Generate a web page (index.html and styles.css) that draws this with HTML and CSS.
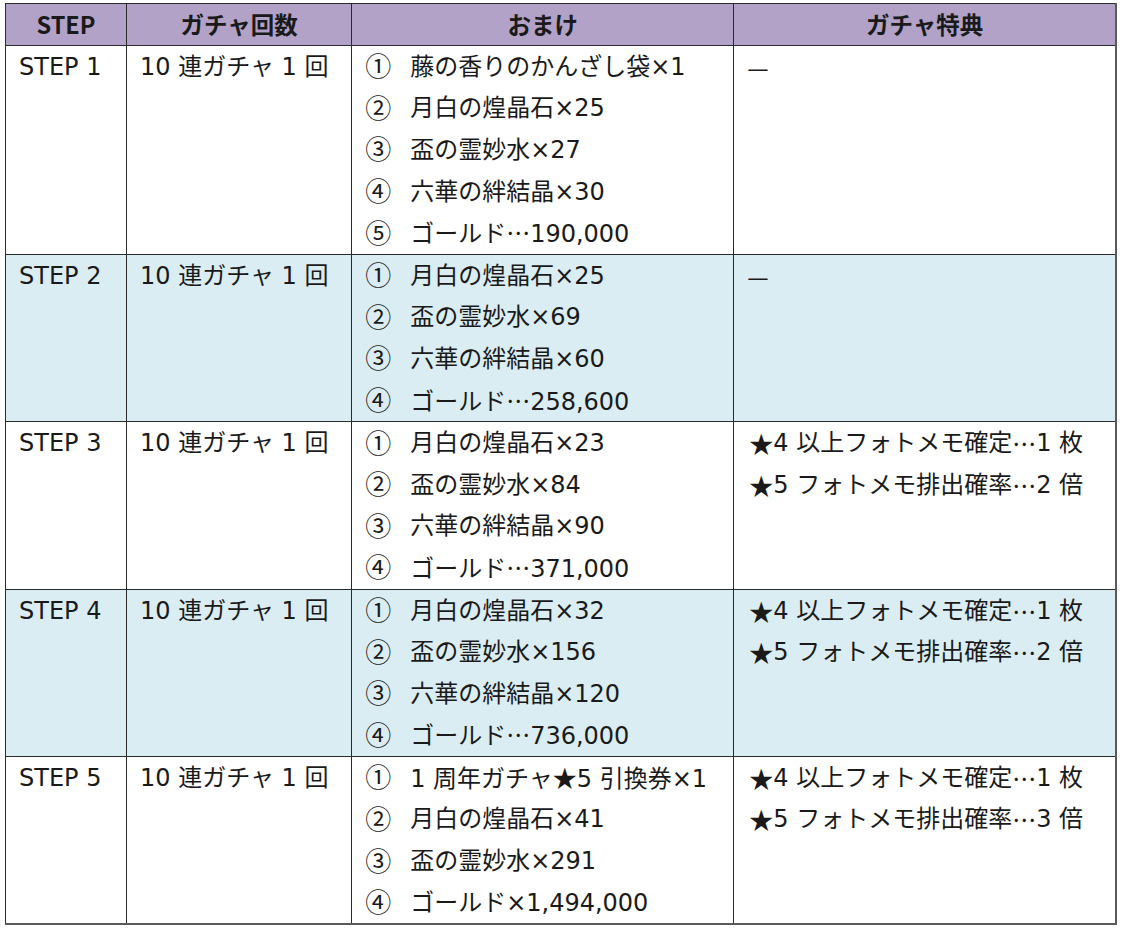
FILE: index.html
```html
<!DOCTYPE html>
<html lang="ja">
<head>
<meta charset="utf-8">
<title>ステップアップガチャ</title>
<link rel="stylesheet" href="styles.css">
</head>
<body>
<div class="wrap">
<table class="gacha">
  <colgroup>
    <col class="w-step"><col class="w-count"><col class="w-bonus"><col class="w-perk">
  </colgroup>
  <thead>
    <tr><th>STEP</th><th>ガチャ回数</th><th>おまけ</th><th>ガチャ特典</th></tr>
  </thead>
  <tbody>
    <tr>
      <td><div class="line">STEP 1</div></td>
      <td><div class="line">10 連ガチャ 1 回</div></td>
      <td>
        <div class="line"><span class="num">①</span><span>藤の香りのかんざし袋×1</span></div>
        <div class="line"><span class="num">②</span><span>月白の煌晶石×25</span></div>
        <div class="line"><span class="num">③</span><span>盃の霊妙水×27</span></div>
        <div class="line"><span class="num">④</span><span>六華の絆結晶×30</span></div>
        <div class="line"><span class="num">⑤</span><span>ゴールド<span class="cj">…</span>190,000</span></div>
      </td>
      <td><div class="line"><span class="cj">—</span></div></td>
    </tr>
    <tr class="alt">
      <td><div class="line">STEP 2</div></td>
      <td><div class="line">10 連ガチャ 1 回</div></td>
      <td>
        <div class="line"><span class="num">①</span><span>月白の煌晶石×25</span></div>
        <div class="line"><span class="num">②</span><span>盃の霊妙水×69</span></div>
        <div class="line"><span class="num">③</span><span>六華の絆結晶×60</span></div>
        <div class="line"><span class="num">④</span><span>ゴールド<span class="cj">…</span>258,600</span></div>
      </td>
      <td><div class="line"><span class="cj">—</span></div></td>
    </tr>
    <tr>
      <td><div class="line">STEP 3</div></td>
      <td><div class="line">10 連ガチャ 1 回</div></td>
      <td>
        <div class="line"><span class="num">①</span><span>月白の煌晶石×23</span></div>
        <div class="line"><span class="num">②</span><span>盃の霊妙水×84</span></div>
        <div class="line"><span class="num">③</span><span>六華の絆結晶×90</span></div>
        <div class="line"><span class="num">④</span><span>ゴールド<span class="cj">…</span>371,000</span></div>
      </td>
      <td>
        <div class="line perk"><span class="cj">★</span>4 以上フォトメモ確定<span class="cj">…</span>1 枚</div>
        <div class="line perk"><span class="cj">★</span>5 フォトメモ排出確率<span class="cj">…</span>2 倍</div>
      </td>
    </tr>
    <tr class="alt">
      <td><div class="line">STEP 4</div></td>
      <td><div class="line">10 連ガチャ 1 回</div></td>
      <td>
        <div class="line"><span class="num">①</span><span>月白の煌晶石×32</span></div>
        <div class="line"><span class="num">②</span><span>盃の霊妙水×156</span></div>
        <div class="line"><span class="num">③</span><span>六華の絆結晶×120</span></div>
        <div class="line"><span class="num">④</span><span>ゴールド<span class="cj">…</span>736,000</span></div>
      </td>
      <td>
        <div class="line perk"><span class="cj">★</span>4 以上フォトメモ確定<span class="cj">…</span>1 枚</div>
        <div class="line perk"><span class="cj">★</span>5 フォトメモ排出確率<span class="cj">…</span>2 倍</div>
      </td>
    </tr>
    <tr>
      <td><div class="line">STEP 5</div></td>
      <td><div class="line">10 連ガチャ 1 回</div></td>
      <td>
        <div class="line"><span class="num">①</span><span>1 周年ガチャ<span class="cj">★</span>5 引換券×1</span></div>
        <div class="line"><span class="num">②</span><span>月白の煌晶石×41</span></div>
        <div class="line"><span class="num">③</span><span>盃の霊妙水×291</span></div>
        <div class="line"><span class="num">④</span><span>ゴールド×1,494,000</span></div>
      </td>
      <td>
        <div class="line perk"><span class="cj">★</span>4 以上フォトメモ確定<span class="cj">…</span>1 枚</div>
        <div class="line perk"><span class="cj">★</span>5 フォトメモ排出確率<span class="cj">…</span>3 倍</div>
      </td>
    </tr>
  </tbody>
</table>
</div>
</body>
</html>
```

FILE: styles.css
```css
html, body {
  margin: 0;
  padding: 0;
  background: #ffffff;
}

.wrap {
  padding: 3px 0 0 5px;
}

.gacha {
  border-collapse: collapse;
  table-layout: fixed;
  width: 1112px;
  font-family: "DejaVu Sans", "Noto Sans CJK JP", sans-serif;
  font-size: 24px;
  color: #1a1a1a;
  border-right: 2px solid #5a5a5a;
  border-bottom: 2px solid #5a5a5a;
}

.w-step { width: 121px; }
.w-count { width: 225px; }
.w-bonus { width: 382px; }
.w-perk { width: 382px; }

.gacha th,
.gacha td {
  border: 1px solid #2a2a2a;
  vertical-align: top;
  padding: 0 0 0 13px;
  text-align: left;
  white-space: nowrap;
}

.gacha th {
  background: #b2a2c8;
  font-family: "Noto Sans CJK JP", "DejaVu Sans", sans-serif;
  font-weight: 700;
  text-align: center;
  padding: 0;
  height: 41px;
  line-height: 40px;
  font-size: 23.5px;
}

.gacha tr.alt td {
  background: #daedf3;
}

.line {
  display: flex;
  align-items: center;
  height: 41.6px;
  line-height: 30px;
  overflow: visible;
}

.num {
  font-family: "Noto Sans CJK JP", sans-serif;
  font-size: 26px;
  width: 45px;
  padding-bottom: 3px;
  flex: none;
}

.cj {
  font-family: "Noto Sans CJK JP", sans-serif;
}

.perk {
  padding-left: 2px;
}
```
